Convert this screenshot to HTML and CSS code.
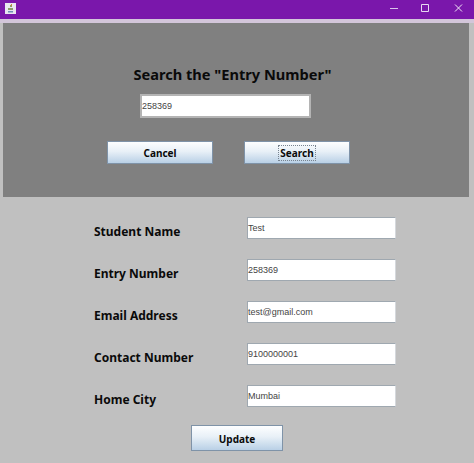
FILE: index.html
```html
<!DOCTYPE html>
<html lang="en">
<head>
    <meta charset="UTF-8">
    <title>Update Student</title>
    <link rel="stylesheet" href="styles.css">
</head>
<body>
    <div class="window">
        <!-- Title Bar -->
        <div class="title-bar">
            <svg class="app-icon" width="11" height="11" viewBox="0 0 11 11">
                <rect width="11" height="11" fill="#e8e6f0"/>
                <path d="M5 2h2v2H5zM3 5h5v2H3z" fill="#8c9a6a"/>
                <path d="M3 8h5v1.500H3z" fill="#6d8fb5"/>
                <path d="M6 1h1v2H6z" fill="#c58a3a"/>
            </svg>
            <div class="window-controls">
                <svg width="32" height="19" viewBox="0 0 32 19"><path d="M12 8.500h8" stroke="#d9c4ea" fill="none"/></svg>
                <svg width="34" height="19" viewBox="0 0 34 19"><path d="M11.500 4.500h7v7h-7z" stroke="#e6d8f0" fill="none"/></svg>
                <svg width="30" height="19" viewBox="0 0 30 19"><path d="M11 4.500l7 7M18 4.500l-7 7" stroke="#f2e9f7" fill="none"/></svg>
            </div>
        </div>

        <div class="content">
            <!-- Search Panel -->
            <div class="search-panel">
                <h1 class="search-title">Search the "Entry Number"</h1>
                <input type="text" class="text-field search-field" value="258369">
                <div class="search-actions">
                    <button class="java-button">Cancel</button>
                    <button class="java-button"><span class="focused">Search</span></button>
                </div>
            </div>

            <!-- Student Form -->
            <div class="student-form">
                <div class="form-rows">
                    <label class="form-label">Student Name</label>
                    <input type="text" class="text-field" value="Test">
                    <label class="form-label">Entry Number</label>
                    <input type="text" class="text-field" value="258369">
                    <label class="form-label">Email Address</label>
                    <input type="text" class="text-field" value="test@gmail.com">
                    <label class="form-label">Contact Number</label>
                    <input type="text" class="text-field" value="9100000001">
                    <label class="form-label">Home City</label>
                    <input type="text" class="text-field" value="Mumbai">
                </div>
                <button class="java-button update-button">Update</button>
            </div>
        </div>
    </div>
</body>
</html>
```

FILE: styles.css
```css
/* General Styling */
html, body {
    margin: 0;
    padding: 0;
}

body {
    width: 474px;
    height: 463px;
    overflow: hidden;
    background-color: #c0c0c0;
    font-family: 'Noto Sans', sans-serif;
}

.window {
    display: flex;
    flex-direction: column;
    height: 463px;
}

/* Title Bar */
.title-bar {
    display: flex;
    justify-content: space-between;
    align-items: center;
    flex: 0 0 19px;
    padding-left: 5px;
    background-color: #7a17ab;
}

.app-icon {
    margin-top: -3px;
}

.window-controls {
    display: flex;
}

/* Content */
.content {
    flex: 1;
    padding: 4px 5px 0 3px;
    background-color: #c0c0c0;
    background-image: linear-gradient(#d3c6da, #d3c6da);
    background-size: 100% 4px;
    background-repeat: no-repeat;
}

/* Search Panel */
.search-panel {
    display: flex;
    flex-direction: column;
    align-items: center;
    height: 174px;
    box-sizing: border-box;
    padding-top: 41px;
    background-color: #808080;
}

.search-title {
    margin: 0 7px 9px 0;
    font-size: 14.600px;
    line-height: 21px;
    font-weight: bold;
    color: #0a0a0a;
}

.search-actions {
    display: flex;
    gap: 31px;
    margin: 23px 15px 0 0;
}

/* Form */
.student-form {
    display: flex;
    flex-direction: column;
    align-items: flex-start;
    padding-top: 20px;
}

.form-rows {
    display: grid;
    grid-template-columns: 153px 149px;
    grid-auto-rows: 22px;
    row-gap: 20px;
    align-items: center;
    margin-left: 91px;
}

.form-label {
    padding-top: 7px;
    font-size: 12px;
    line-height: 16px;
    font-weight: bold;
    color: #0a0a0a;
}

/* Controls */
.text-field {
    box-sizing: border-box;
    width: 149px;
    height: 22px;
    margin: 0;
    padding: 0;
    border: 1px solid #9fa8b0;
    border-right-color: #d5d8dc;
    background-color: #fff;
    font-family: 'Liberation Sans', Arial, sans-serif;
    font-size: 9px;
    color: #444;
    outline: none;
}

.search-field {
    width: 171px;
    height: 24px;
    margin-right: 21px;
    border: 2px solid #b4b4b4;
}

.java-button {
    box-sizing: border-box;
    width: 106px;
    height: 23px;
    padding: 0;
    border: 1px solid #7f93a8;
    background: linear-gradient(#fdfeff, #e8f0f7 45%, #b9d0e6);
    font-family: 'Noto Sans', sans-serif;
    font-size: 10px;
    font-weight: bold;
    color: #0a0a0a;
}

.focused {
    padding: 0 1px;
    outline: 1px dotted #77838f;
}

.update-button {
    width: 92px;
    height: 26px;
    margin: 18px 0 0 188px;
    padding-top: 1px;
}
```
